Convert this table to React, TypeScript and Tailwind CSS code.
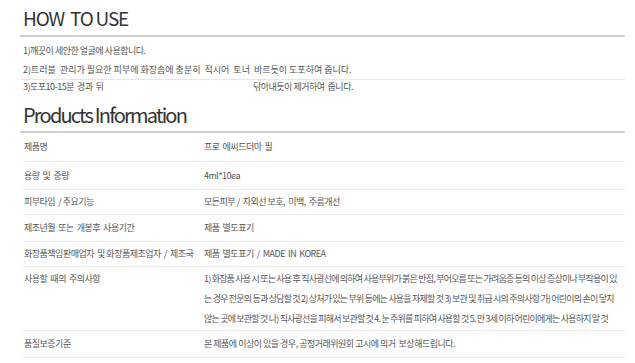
import React from 'react';

const KR = "font-['Noto_Sans_CJK_KR',sans-serif]";

interface InfoRow {
    label: string;
    value: React.ReactNode;
    height: string;
    top?: boolean;
}

const rows: InfoRow[] = [
    { label: '제품명', value: '프로  에씨드더마  필', height: 'h-[29px]' },
    { label: '용량  및  중량', value: '4ml*10ea', height: 'h-[28px]' },
    {
        label: '피부타입  / 주요기능',
        value: '모든피부 /  자외선 보호,  미백,  주름개선',
        height: 'h-[25px]'
    },
    {
        label: '제조년월  또는  개봉후  사용기간',
        value: '제품  별도표기',
        height: 'h-[27px]'
    },
    {
        label: '화장품책임판매업자  및 화장품제조업자  /  제조국',
        value: '제품  별도표기  /  MADE  IN  KOREA',
        height: 'h-[25px]'
    },
    {
        label: '사용할  때의  주의사항',
        value: (
            <div className="flex flex-col tracking-[-0.8px]">
                <span className="h-[20px] leading-[20px] whitespace-nowrap">
                    1) 화장품 사용 시 또는 사용 후 직사광선에 의하여 사용부위가 붉은 반점, 부어오름 또는 가려움증 등의 이상 증상이나 부작용이 있
                </span>
                <span className="h-[20px] leading-[20px] whitespace-nowrap">
                    는 경우 전문의 등과 상담할 것 2) 상처가 있는 부위 등에는 사용을 자제할 것 3) 보관 및 취급 시의 주의사항 가) 어린이의 손이 닿지
                </span>
                <span className="h-[20px] leading-[20px] whitespace-nowrap">
                    않는 곳에 보관할 것 나) 직사광선을 피해서 보관할 것 4. 눈 주위를 피하여 사용할 것 5. 만 3세 이하 어린이에게는 사용하지 말 것
                </span>
            </div>
        ),
        height: 'h-[64px]',
        top: true
    },
    {
        label: '품질보증기준',
        value: '본 제품에 이상이 있을 경우, 공정거래위원회 고시에 의거  보상해드립니다.',
        height: 'h-[27px]'
    }
];

export default function App() {
    return (
        <div
            className={`w-[635px] h-[363px] overflow-hidden bg-white pl-[20px] pr-[10px] text-[#555] ${KR}`}
        >
            <div className="h-[37px] border-b-2 border-[#d2d2d2] pl-[3px] pt-[8px]">
                <h2 className="text-[19px] leading-[19px] font-normal text-[#333] whitespace-pre tracking-[-1.2px]">
                    HOW  TO USE
                </h2>
            </div>
            <div className="pt-[4px] text-[9px] tracking-[-0.5px] whitespace-pre">
                <div className="h-[19px] pl-[3px] flex items-center">
                    1)깨끗이 세안한 얼굴에 사용합니다.
                </div>
                <div className="h-[20px] pl-[3px] flex items-center border-b border-[#e6e6e6] tracking-[0px]">
                    2)트러블  관리가 필요한 피부에 화장솜에 충분히  적시어  토너  바르듯이 도포하여 줍니다.
                </div>
                <div className="h-[14px] pl-[3px] flex items-center">
                    <span className="w-[230px]">3)도포10-15분  경과  뒤</span>
                    <span>닦아내듯이 제거하여  줍니다.</span>
                </div>
            </div>
            <div className="h-[39px] border-b-2 border-[#d2d2d2] pl-[3px] flex items-end pb-[6px]">
                <h2 className="text-[20px] leading-[20px] font-normal text-[#333] tracking-[-1.8px]">
                    Products Information
                </h2>
            </div>
            <div className="ml-[3px] text-[9px] tracking-[-0.5px]">
                {rows.map((row) => (
                    <div
                        key={row.label}
                        className={`${row.height} flex border-b border-[#ebebeb] pl-[1px] ${row.top ? 'items-start pt-[2px]' : 'items-center'}`}
                    >
                        <div
                            className={`w-[180px] shrink-0 whitespace-pre ${row.top ? 'h-[20px] leading-[20px]' : ''}`}
                        >
                            {row.label}
                        </div>
                        <div className="whitespace-pre">{row.value}</div>
                    </div>
                ))}
            </div>
        </div>
    );
}
